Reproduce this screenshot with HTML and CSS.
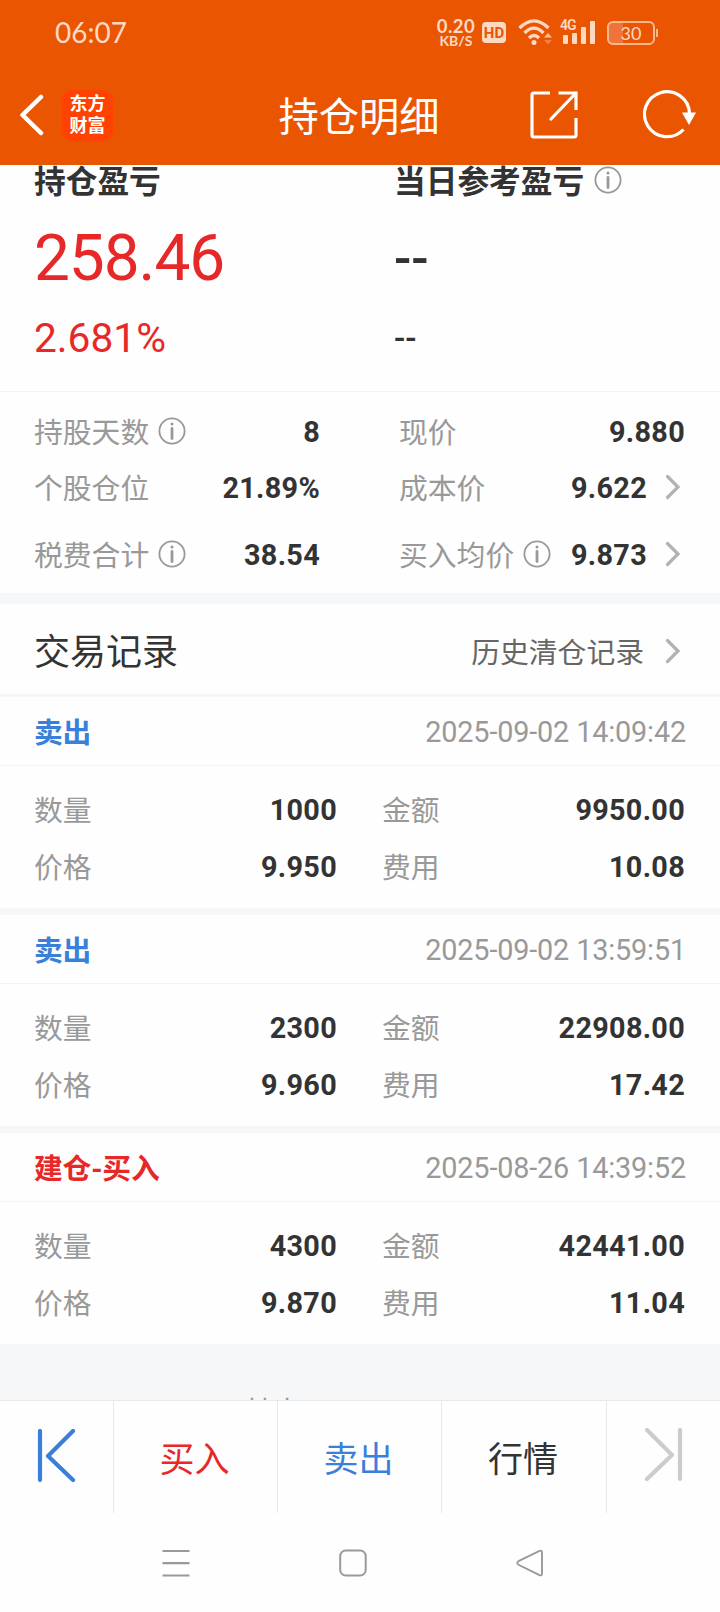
FILE: index.html
```html
<!DOCTYPE html>
<html lang="zh-CN">
<head>
  <meta charset="UTF-8">
  <meta name="viewport" content="width=device-width, initial-scale=1.0">
  <title>持仓明细</title>
  <link rel="stylesheet" href="styles.css">
</head>
<body>
  <svg class="defs" width="0" height="0">
    <symbol id="info" viewBox="0 0 28 28">
      <circle cx="14" cy="14" r="12.6" fill="none" stroke="#999" stroke-width="1.8"/>
      <circle cx="14" cy="7" r="1.5" fill="#999"/>
      <path d="M14 11.5v10" stroke="#999" stroke-width="2.8" stroke-linecap="round"/>
    </symbol>
    <symbol id="arrow" viewBox="0 0 16 26">
      <path d="M2.5 2.5L13 13L2.5 23.5" fill="none" stroke="#b2b2b2" stroke-width="3.2" stroke-linecap="round"/>
    </symbol>
  </svg>

  <header class="header">
    <div class="status">
      <span class="time">06:07</span>
      <div class="status-icons">
        <div class="speed"><b>0.20</b><span>KB/S</span></div>
        <span class="hd">HD</span>
        <svg class="wifi" width="34" height="28" viewBox="0 0 34 28">
          <g fill="none" stroke="#fdd9c2" stroke-width="3.2">
            <path d="M1.5 10Q16 -4.5 30.5 10"/>
            <path d="M6.5 15Q16 5.5 25.5 15"/>
            <path d="M11 20Q16 15 21 20"/>
          </g>
          <circle cx="16" cy="24.5" r="2.5" fill="#fdd9c2"/>
          <path d="M26 19.5L30 15L34 19.5z" fill="#fdc4a0"/>
          <path d="M26 22L30 26.5L34 22z" fill="#f0813f"/>
        </svg>
        <div class="signal">
          <span class="net">4G</span>
          <svg width="34" height="26" viewBox="0 0 34 26" fill="#fdd9c2">
            <rect x="2" y="15" width="5" height="9" rx="1"/>
            <rect x="11" y="13" width="5" height="11" rx="1"/>
            <rect x="20" y="7" width="5" height="17" rx="1"/>
            <rect x="29" y="1" width="5" height="23" rx="1"/>
          </svg>
        </div>
        <div class="battery"><span>30</span></div>
      </div>
    </div>
    <div class="nav">
      <div class="nav-left">
        <svg width="26" height="42" viewBox="0 0 26 42"><path d="M23 3L4.500 21L23 39" fill="none" stroke="#fff" stroke-width="4.500" stroke-linecap="round" stroke-linejoin="round"/></svg>
        <div class="logo">东方<br>财富</div>
      </div>
      <h1>持仓明细</h1>
      <div class="nav-right">
        <svg width="48" height="48" viewBox="0 0 48 48" fill="none" stroke="#fff" stroke-width="3.200">
          <path d="M20 2H4Q2 2 2 4V44Q2 46 4 46H44Q46 46 46 44V27"/>
          <path d="M28.500 2H46V19"/>
          <path d="M45.500 2.500L21 28" stroke-linecap="round"/>
        </svg>
        <svg width="54" height="50" viewBox="0 0 54 50">
          <path d="M40.500 39.500A22.500 22.500 0 1 1 46.500 23.500" fill="none" stroke="#fff" stroke-width="3.200"/>
          <path d="M39 22.500H53L46 35z" fill="#fff"/>
        </svg>
      </div>
    </div>
  </header>

  <section class="summary">
    <div class="summary-col">
      <h2>持仓盈亏</h2>
      <div class="profit red">258.46</div>
      <div class="rate red">2.681%</div>
    </div>
    <div class="summary-col">
      <h2>当日参考盈亏<svg class="info"><use href="#info"/></svg></h2>
      <div class="profit dash">--</div>
      <div class="rate dash">--</div>
    </div>
  </section>

  <section class="detail">
    <div class="cell"><span class="label">持股天数</span><svg class="info"><use href="#info"/></svg><b>8</b></div>
    <div class="cell"><span class="label">现价</span><b>9.880</b></div>
    <div class="cell"><span class="label">个股仓位</span><b>21.89%</b></div>
    <div class="cell"><span class="label">成本价</span><b>9.622</b><svg class="arrow"><use href="#arrow"/></svg></div>
    <div class="cell"><span class="label">税费合计</span><svg class="info"><use href="#info"/></svg><b>38.54</b></div>
    <div class="cell"><span class="label">买入均价</span><svg class="info"><use href="#info"/></svg><b>9.873</b><svg class="arrow"><use href="#arrow"/></svg></div>
  </section>

  <section class="records">
    <div class="records-title">
      <h3>交易记录</h3>
      <span class="history">历史清仓记录</span>
      <svg class="arrow"><use href="#arrow"/></svg>
    </div>

    <article class="record">
      <div class="record-head"><b class="blue">卖出</b><time>2025-09-02 14:09:42</time></div>
      <div class="record-body">
        <div class="cell"><span class="label">数量</span><b>1000</b></div>
        <div class="cell"><span class="label">金额</span><b>9950.00</b></div>
        <div class="cell"><span class="label">价格</span><b>9.950</b></div>
        <div class="cell"><span class="label">费用</span><b>10.08</b></div>
      </div>
    </article>

    <article class="record">
      <div class="record-head"><b class="blue">卖出</b><time>2025-09-02 13:59:51</time></div>
      <div class="record-body">
        <div class="cell"><span class="label">数量</span><b>2300</b></div>
        <div class="cell"><span class="label">金额</span><b>22908.00</b></div>
        <div class="cell"><span class="label">价格</span><b>9.960</b></div>
        <div class="cell"><span class="label">费用</span><b>17.42</b></div>
      </div>
    </article>

    <article class="record">
      <div class="record-head"><b class="red">建仓-买入</b><time>2025-08-26 14:39:52</time></div>
      <div class="record-body">
        <div class="cell"><span class="label">数量</span><b>4300</b></div>
        <div class="cell"><span class="label">金额</span><b>42441.00</b></div>
        <div class="cell"><span class="label">价格</span><b>9.870</b></div>
        <div class="cell"><span class="label">费用</span><b>11.04</b></div>
      </div>
    </article>
  </section>

  <div class="more">其中</div>

  <nav class="tabs">
    <div class="tab tab-prev">
      <svg width="40" height="56" viewBox="0 0 40 56" fill="none" stroke="#3a80d9" stroke-width="4.200" stroke-linecap="round" stroke-linejoin="round"><path d="M3 2V51M36 2L11 27L36 51"/></svg>
    </div>
    <div class="tab red">买入</div>
    <div class="tab blue">卖出</div>
    <div class="tab">行情</div>
    <div class="tab tab-next">
      <svg width="40" height="56" viewBox="0 0 40 56" fill="none" stroke="#ccc" stroke-width="4.200" stroke-linecap="round" stroke-linejoin="round"><path d="M37 2V51M4 2L29 27L4 51"/></svg>
    </div>
  </nav>

  <footer class="system">
    <svg width="28" height="28" viewBox="0 0 28 28" stroke="#999" stroke-width="2.200"><path d="M0.500 2H27.500M0.500 14.200H27.500M0.500 26.500H27.500"/></svg>
    <svg width="28" height="28" viewBox="0 0 28 28"><rect x="1.200" y="1.500" width="25.500" height="25" rx="5.500" fill="none" stroke="#999" stroke-width="2"/></svg>
    <svg width="28" height="28" viewBox="0 0 28 28"><path d="M2.500 12.200L23.500 1.800Q26 1 26 3.500V24.500Q26 27 23.500 26.200L2.500 15.800Q0 14 2.500 12.200z" fill="none" stroke="#999" stroke-width="1.900"/></svg>
  </footer>
</body>
</html>
```
FILE: styles.css
```css
* { box-sizing: border-box; margin: 0; padding: 0; }
body { width: 720px; height: 1612px; overflow: hidden; background: #fefefe; color: #333; font-family: Roboto, "Noto Sans CJK SC", sans-serif; font-size: 28.8px; }
svg { display: block; flex: none; }
.defs { position: absolute; }
.red { color: #e62828; }
.blue { color: #3a80d9; }

.header { height: 165px; background: #ea5502; color: #fff; }
.status { display: flex; justify-content: space-between; height: 65px; padding: 0 65px 0 55px; color: #fdd9c2; }
.time { font-family: Lato, sans-serif; font-size: 28px; line-height: 64px; }
.status-icons { display: flex; align-items: center; }
.speed { display: flex; flex-direction: column; width: 40px; margin-right: 6px; text-align: center; font-family: Lato, sans-serif; }
.speed b { font-size: 18.5px; line-height: 16px; font-weight: 700; letter-spacing: 0.5px; }
.speed span { font-size: 14px; line-height: 14px; font-weight: 700; }
.hd { width: 24px; height: 21px; margin-right: 12px; border-radius: 4px; background: #fdd9c2; color: #ea5502; font-size: 15px; font-weight: 700; line-height: 22px; text-align: center; }
.wifi { margin: -2px 9px 0 0; }
.signal { position: relative; margin-right: 12px; }
.net { position: absolute; left: -1px; top: -2px; font-size: 14px; font-weight: 600; line-height: 14px; letter-spacing: -1px; }
.battery { position: relative; width: 48px; height: 24px; border: 2px solid #fbb78e; border-radius: 6px; background: linear-gradient(to right, #f0743a 14px, transparent 14px); font-family: Lato, sans-serif; font-size: 18px; line-height: 21px; text-align: center; }
.battery::after { content: ""; position: absolute; right: -5px; top: 6px; width: 2px; height: 8px; background: #fbb78e; }

.nav { display: grid; grid-template-columns: 1fr auto 1fr; align-items: center; height: 100px; padding: 0 23px 0 18px; }
.nav-left { display: flex; align-items: center; gap: 18px; }
.logo { width: 51px; height: 51px; border-radius: 10px; background: #ff4200; font-size: 18px; font-weight: 700; line-height: 22px; padding-top: 3px; text-align: center; }
h1 { padding: 5px 0 0 3px; font-size: 40.3px; font-weight: 400; line-height: 95px; }
.nav-right { display: flex; align-items: center; justify-content: flex-end; gap: 65px; }

.summary { display: grid; grid-template-columns: 360px 1fr; height: 227px; padding-left: 34px; border-bottom: 1px solid #f3f3f3; }
h2 { display: flex; font-size: 31.7px; font-weight: 700; line-height: 36px; }
h2 .info { margin: 1px 0 0 10px; }
.info { width: 28px; height: 28px; margin: 0 0 2px 9px; }
.profit { margin-top: 25px; font-size: 64px; line-height: 66px; letter-spacing: -1.1px; }
.rate { margin-top: 22px; font-size: 40.7px; line-height: 48px; }
.dash { font-weight: 500; }
.profit.dash { height: 66px; font-size: 51px; letter-spacing: 0; }
.rate.dash { padding-top: 1px; font-size: 33px; }

.detail { display: grid; grid-template-columns: 286px 1fr; grid-template-rows: 80px 32px 101px; column-gap: 79px; height: 201px; padding: 0 35px 0 34px; }
.cell { display: flex; align-items: center; line-height: 42px; }
.label { padding-top: 2px; color: #999; }
.cell b { margin-left: auto; font-weight: 700; letter-spacing: 0.3px; }
.arrow { width: 16px; height: 26px; margin: 0 4px 2px 18px; }

.records { border-top: 11px solid #f6f7f9; }
.records-title { display: flex; align-items: center; height: 93px; padding: 0 35px 0 34px; border-bottom: 3px solid #f6f7f9; }
.records-title .arrow { margin: 3px 4px 0 21px; }
h3 { flex: 1; font-size: 36px; font-weight: 400; }
.history { padding-top: 2px; color: #666; }
.record { height: 218px; border-bottom: 7px solid #f6f7f9; }
.record-head { display: flex; justify-content: space-between; align-items: center; height: 69px; padding: 0 34px; border-bottom: 1px solid #f3f3f3; }
.record-head b { padding-bottom: 2px; letter-spacing: -0.2px; }
.record-head time { padding-top: 2px; color: #999; letter-spacing: -0.15px; }
.record-body { display: grid; grid-template-columns: 303px 1fr; grid-template-rows: 57px 57px; column-gap: 45px; padding: 15px 35px 0 34px; }

/* next line of the list starts just above the tab bar */
.more { height: 49px; padding: 40px 0 0 244px; overflow: hidden; background: #f6f7f9; color: #999; line-height: 43px; }

.tabs { display: grid; grid-template-columns: 114px 164px 164px 165px 1fr; height: 113px; border-top: 1px solid #e9e9e9; }
.tab { display: flex; align-items: center; justify-content: center; height: 112px; padding: 0 2px 2px 0; border-right: 1px solid #e9e9e9; font-size: 35px; }
.tab-prev { padding: 0 0 1px; }
.tab:last-child { border-right: none; }

.system { display: flex; justify-content: center; gap: 149px; padding: 36px 14px 0 0; }
```
